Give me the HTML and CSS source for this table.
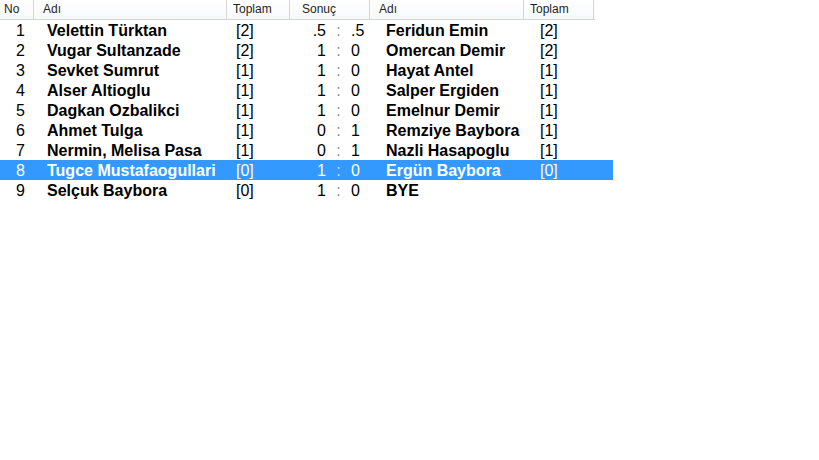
FILE: index.html
```html
<!DOCTYPE html>
<html lang="tr">
<head>
    <meta charset="UTF-8">
    <title>Eşleşmeler</title>
    <link rel="stylesheet" href="styles.css">
</head>
<body>
    <div class="pairings">
        <!-- Column headers -->
        <div class="head">
            <div class="hcell">No</div>
            <div class="hcell hname">Adı</div>
            <div class="hcell">Toplam</div>
            <div class="hcell hscore">Sonuç</div>
            <div class="hcell hname">Adı</div>
            <div class="hcell">Toplam</div>
        </div>

        <div class="row">
            <div class="no">1</div><div class="name">Velettin Türktan</div><div class="pts">[2]</div>
            <div class="score"><span class="l">.5</span><span class="sep">:</span><span class="r">.5</span></div>
            <div class="name name2">Feridun Emin</div><div class="pts pts2">[2]</div>
        </div>
        <div class="row">
            <div class="no">2</div><div class="name">Vugar Sultanzade</div><div class="pts">[2]</div>
            <div class="score"><span class="l">1</span><span class="sep">:</span><span class="r">0</span></div>
            <div class="name name2">Omercan Demir</div><div class="pts pts2">[2]</div>
        </div>
        <div class="row">
            <div class="no">3</div><div class="name">Sevket Sumrut</div><div class="pts">[1]</div>
            <div class="score"><span class="l">1</span><span class="sep">:</span><span class="r">0</span></div>
            <div class="name name2">Hayat Antel</div><div class="pts pts2">[1]</div>
        </div>
        <div class="row">
            <div class="no">4</div><div class="name">Alser Altioglu</div><div class="pts">[1]</div>
            <div class="score"><span class="l">1</span><span class="sep">:</span><span class="r">0</span></div>
            <div class="name name2">Salper Ergiden</div><div class="pts pts2">[1]</div>
        </div>
        <div class="row">
            <div class="no">5</div><div class="name">Dagkan Ozbalikci</div><div class="pts">[1]</div>
            <div class="score"><span class="l">1</span><span class="sep">:</span><span class="r">0</span></div>
            <div class="name name2">Emelnur Demir</div><div class="pts pts2">[1]</div>
        </div>
        <div class="row">
            <div class="no">6</div><div class="name">Ahmet Tulga</div><div class="pts">[1]</div>
            <div class="score"><span class="l">0</span><span class="sep">:</span><span class="r">1</span></div>
            <div class="name name2">Remziye Baybora</div><div class="pts pts2">[1]</div>
        </div>
        <div class="row">
            <div class="no">7</div><div class="name">Nermin, Melisa Pasa</div><div class="pts">[1]</div>
            <div class="score"><span class="l">0</span><span class="sep">:</span><span class="r">1</span></div>
            <div class="name name2">Nazli Hasapoglu</div><div class="pts pts2">[1]</div>
        </div>
        <div class="row selected">
            <div class="no">8</div><div class="name">Tugce Mustafaogullari</div><div class="pts">[0]</div>
            <div class="score"><span class="l">1</span><span class="sep">:</span><span class="r">0</span></div>
            <div class="name name2">Ergün Baybora</div><div class="pts pts2">[0]</div>
        </div>
        <div class="row">
            <div class="no">9</div><div class="name">Selçuk Baybora</div><div class="pts">[0]</div>
            <div class="score"><span class="l">1</span><span class="sep">:</span><span class="r">0</span></div>
            <div class="name name2">BYE</div><div class="pts pts2"></div>
        </div>
    </div>
</body>
</html>
```

FILE: styles.css
```css
* {
    margin: 0;
    padding: 0;
    box-sizing: border-box;
}

body {
    background: #ffffff;
    font-family: 'Liberation Sans', Arial, sans-serif;
    color: #000000;
}

.pairings {
    width: 613px;
}

/* Header */
.head {
    display: grid;
    grid-template-columns: 34px 193px 63px 80px 154px 70px;
    width: 595px;
    height: 20px;
    background: linear-gradient(#ffffff, #f8f9fa);
    border-bottom: 1px solid #d5d5d5;
}

.hcell {
    font-size: 12px;
    line-height: 19px;
    color: #1e1e1e;
    padding-left: 4px;
    border-right: 1px solid #d5d5d5;
    white-space: nowrap;
    overflow: hidden;
}

.hcell.hname {
    padding-left: 9px;
}

.hcell:nth-child(3),
.hcell:nth-child(6) {
    padding-left: 6px;
}

.hcell.hscore {
    padding-left: 12px;
}

/* Rows */
.row {
    display: grid;
    grid-template-columns: 34px 193px 63px 80px 154px 70px 19px;
    height: 20px;
    font-size: 16px;
    line-height: 22px;
}

.row.selected {
    background: #3399ff;
    color: #ffffff;
}

.no {
    text-align: right;
    padding-right: 9px;
}

.name {
    font-weight: bold;
    padding-left: 13px;
    white-space: nowrap;
}

.name2 {
    padding-left: 16px;
}

.pts {
    padding-left: 9px;
}

.pts2 {
    padding-left: 16px;
}

.score {
    display: flex;
}

.score .l {
    width: 36px;
    text-align: right;
}

.score .sep {
    width: 25px;
    text-align: center;
    color: #8a8a8a;
}

.row.selected .score .sep {
    color: #cfe6ff;
}
```
